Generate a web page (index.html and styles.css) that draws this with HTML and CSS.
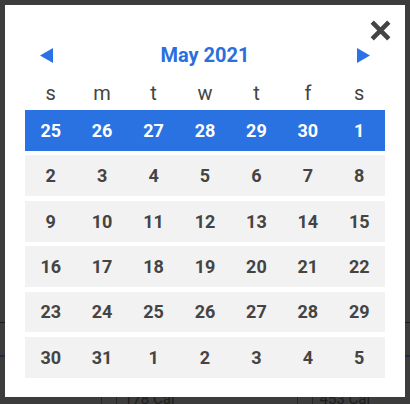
FILE: index.html
```html
<!DOCTYPE html>
<html lang="en">
<head>
    <meta charset="UTF-8">
    <meta name="viewport" content="width=device-width, initial-scale=1.0">
    <title>Pick a date</title>
    <link rel="stylesheet" href="styles.css">
</head>
<body>

    <div class="modal">
        <div class="close-row">
            <button class="close" aria-label="Close">
                <svg width="21" height="21" viewBox="0 0 21 21">
                    <path d="M2.2 2.2 L18.8 18.8 M18.8 2.2 L2.2 18.8" stroke="#444" stroke-width="4.6" fill="none"/>
                </svg>
            </button>
        </div>

        <div class="month-nav">
            <button class="arrow" aria-label="Previous month">
                <svg width="13" height="15" viewBox="0 0 13 15"><polygon points="13,0 13,15 0,7.5" fill="#2a72e6"/></svg>
            </button>
            <span class="month-title">May 2021</span>
            <button class="arrow" aria-label="Next month">
                <svg width="13" height="15" viewBox="0 0 13 15"><polygon points="0,0 0,15 13,7.5" fill="#2a72e6"/></svg>
            </button>
        </div>

        <div class="weekdays">
            <span>s</span><span>m</span><span>t</span><span>w</span><span>t</span><span>f</span><span>s</span>
        </div>

        <div class="weeks">
            <div class="week current">
                <span>25</span><span>26</span><span>27</span><span>28</span><span>29</span><span>30</span><span>1</span>
            </div>
            <div class="week">
                <span>2</span><span>3</span><span>4</span><span>5</span><span>6</span><span>7</span><span>8</span>
            </div>
            <div class="week">
                <span>9</span><span>10</span><span>11</span><span>12</span><span>13</span><span>14</span><span>15</span>
            </div>
            <div class="week">
                <span>16</span><span>17</span><span>18</span><span>19</span><span>20</span><span>21</span><span>22</span>
            </div>
            <div class="week">
                <span>23</span><span>24</span><span>25</span><span>26</span><span>27</span><span>28</span><span>29</span>
            </div>
            <div class="week">
                <span>30</span><span>31</span><span>1</span><span>2</span><span>3</span><span>4</span><span>5</span>
            </div>
        </div>
    </div>

    <div class="behind">
        <span class="cell-line"></span>
        <span class="cal">178 Cal</span>
        <span class="cell-line second"></span>
        <span class="cal">453 Cal</span>
    </div>

</body>
</html>
```

FILE: styles.css
```css
body {
    margin: 0;
    height: 404px;
    overflow: hidden;
    font-family: Roboto, "Liberation Sans", sans-serif;
    background-color: #3c3c3c;
    background-image:
        linear-gradient(to bottom, transparent 322px, #1c1c1c 322px, #1c1c1c 323px, transparent 323px),
        linear-gradient(to bottom, transparent 355px, #1e2c48 355px, #1e2c48 357px, transparent 357px);
}

button {
    background: none;
    border: none;
    padding: 0;
    cursor: pointer;
    display: flex;
}

.modal {
    box-sizing: border-box;
    height: 392px;
    margin: 5px 5px 0;
    padding: 15px 20px 0;
    background: #fff;
}

.close-row {
    display: flex;
    justify-content: flex-end;
    margin-right: -6px;
    height: 20px;
}

.month-nav {
    display: flex;
    justify-content: space-between;
    align-items: center;
    margin-top: 3px;
    padding: 0 15px;
    height: 24px;
}

.month-title {
    font-size: 20px;
    font-weight: bold;
    color: #2a6fe0;
    line-height: 24px;
}

.weekdays {
    display: grid;
    grid-template-columns: repeat(7, 1fr);
    margin-top: 14px;
    font-size: 20px;
    line-height: 24px;
    color: #444;
    text-align: center;
}

.weeks {
    display: flex;
    flex-direction: column;
    gap: 4.6px;
    margin-top: 5px;
}

.week {
    display: grid;
    grid-template-columns: repeat(7, 1fr);
    height: 40.8px;
    background: #f2f2f2;
    color: #444;
    font-size: 18px;
    font-weight: bold;
}

.week span {
    display: flex;
    align-items: center;
    justify-content: center;
}

.week.current {
    background: #2a72e2;
    color: #fff;
}

.behind {
    display: flex;
    height: 7px;
    overflow: hidden;
    padding-left: 101px;
    font-size: 15px;
    line-height: 5px;
    color: #1e1e1e;
}

.cell-line {
    width: 14px;
    border-left: 1px solid #262626;
    border-right: 1px solid #262626;
    margin-right: 7px;
}

.cell-line.second {
    margin-left: 122px;
}
```
